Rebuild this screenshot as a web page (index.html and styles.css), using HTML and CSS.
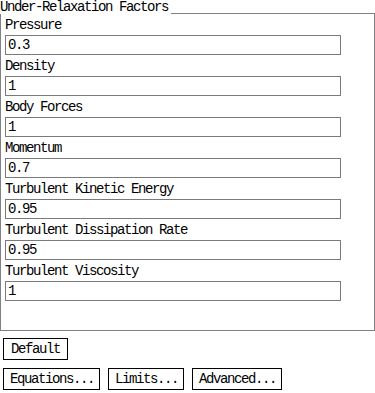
FILE: index.html
```html
<!DOCTYPE html>
<html lang="en">
<head>
    <meta charset="UTF-8">
    <meta name="viewport" content="width=device-width, initial-scale=1.0">
    <title>Under-Relaxation Factors</title>
    <link rel="stylesheet" href="styles.css">
</head>
<body>
    <div class="panel">
        <div class="panel-head">
            <span class="panel-title">Under-Relaxation Factors</span>
            <span class="panel-rule"></span>
        </div>
        <div class="panel-body">
            <label class="field-label" for="pressure">Pressure</label>
            <input class="field-input" id="pressure" type="text" value="0.3">
            <label class="field-label" for="density">Density</label>
            <input class="field-input" id="density" type="text" value="1">
            <label class="field-label" for="body-forces">Body Forces</label>
            <input class="field-input" id="body-forces" type="text" value="1">
            <label class="field-label" for="momentum">Momentum</label>
            <input class="field-input" id="momentum" type="text" value="0.7">
            <label class="field-label" for="tke">Turbulent Kinetic Energy</label>
            <input class="field-input" id="tke" type="text" value="0.95">
            <label class="field-label" for="tdr">Turbulent Dissipation Rate</label>
            <input class="field-input" id="tdr" type="text" value="0.95">
            <label class="field-label" for="tv">Turbulent Viscosity</label>
            <input class="field-input" id="tv" type="text" value="1">
        </div>
    </div>

    <div class="btn-row">
        <button class="btn btn-default">Default</button>
    </div>
    <div class="btn-row">
        <button class="btn">Equations...</button>
        <button class="btn">Limits...</button>
        <button class="btn">Advanced...</button>
    </div>
</body>
</html>
```

FILE: styles.css
```css
body {
    margin: 0;
    font-family: "Liberation Mono", "DejaVu Sans Mono", monospace;
    font-size: 14px;
    letter-spacing: -1.4px;
    color: #000;
    background-color: #fff;
}
.panel {
    width: 375px;
}
.panel-head {
    display: flex;
    align-items: flex-end;
    height: 14px;
}
.panel-title {
    line-height: 14px;
    white-space: nowrap;
}
.panel-rule {
    flex: 1;
    margin-left: 3px;
    border-bottom: 1px solid #808085;
}
.panel-body {
    display: flex;
    flex-direction: column;
    align-items: flex-start;
    padding: 0 4px 29px 4px;
    border: 1px solid #808085;
    border-top: none;
}
.field-label {
    display: block;
    height: 21px;
    line-height: 22px;
}
.field-input {
    box-sizing: border-box;
    width: 336px;
    height: 20px;
    margin: 0;
    padding: 0 2px;
    border: 1px solid #7a7a7a;
    border-radius: 0;
    font: inherit;
    letter-spacing: inherit;
    color: #000;
    background-color: #fff;
    outline: none;
}
.btn-row {
    display: flex;
    gap: 8px;
    padding-left: 3px;
    margin-top: 7px;
}
.btn-row + .btn-row {
    margin-top: 8px;
}
.btn {
    height: 22px;
    margin: 0;
    padding: 0 5px 0 6px;
    border: 1px solid #000;
    border-radius: 0;
    font: inherit;
    letter-spacing: inherit;
    color: #000;
    background-color: #fff;
    cursor: pointer;
}
.btn-default {
    padding: 0 7px 0 7px;
}
```
